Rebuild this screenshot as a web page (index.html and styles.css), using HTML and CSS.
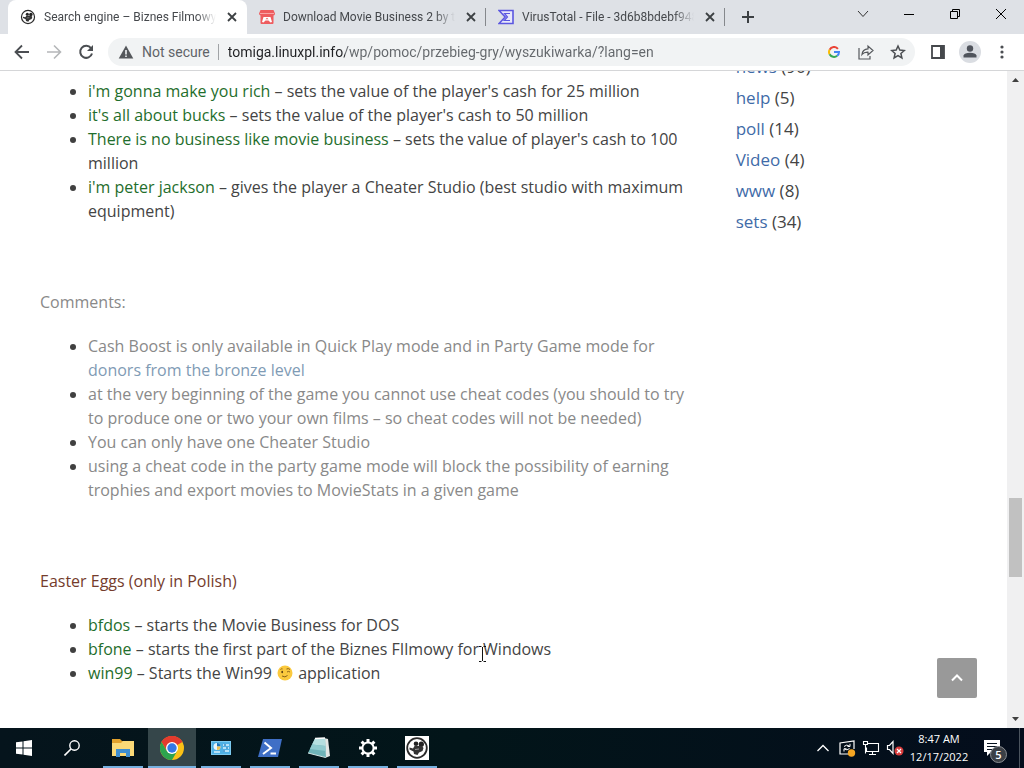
FILE: index.html
```html
<!DOCTYPE html>
<html lang="en">
<head>
<meta charset="utf-8">
<title>Search engine – Biznes Filmowy</title>
<link rel="stylesheet" href="styles.css">
</head>
<body>
<svg class="sprite" aria-hidden="true">
  <symbol id="x" viewBox="0 0 12 12"><path d="M2 2l8 8M10 2l-8 8" stroke="#3c4043" stroke-width="1.8" fill="none"/></symbol>
  <symbol id="mouse" viewBox="0 0 24 24"><circle cx="12" cy="12" r="9.800" fill="#fff" stroke="#2a2a2a" stroke-width="1.800"/><circle cx="11" cy="7.800" r="2.300" fill="#222"/><circle cx="16.300" cy="8.200" r="2.600" fill="#222"/><path d="M4.500 11.500l3.500 1 1.500-2.500h7.500l1.500 2-1 3-3.500 1.500-1.500 2.500-3.500-1-.5-2.500-4-2z" fill="#333"/><path d="M10 13.500l4-.5" stroke="#999" stroke-width="1"/></symbol>
</svg>
<div class="desktop">
  <header class="tabstrip">
    <div class="tabs" role="tablist">
      <div class="tab tab-active" role="tab" aria-selected="true">
        <svg class="i16"><use href="#mouse"/></svg>
        <span class="tab-title">Search engine – Biznes Filmowy</span>
        <button class="tab-close" aria-label="Close tab"><svg class="i12"><use href="#x"/></svg></button>
      </div>
      <div class="tab" role="tab">
        <svg class="i16" viewBox="0 0 16 16"><path d="M1.500 1h13l1.500 3.500q0 1.800-1.500 2V14q0 1-1 1h-11q-1 0-1-1V6.500Q0 6 0 4.500z" fill="#ee5c5f"/><path d="M1 4.500h14" stroke="#f9a5a6" stroke-width="1"/><path d="M4.500 8h7l1.500 5-1.500.5-2-2h-3l-2 2L3 13z" fill="#fff"/><path d="M8 8.800l1.500 1.500h-3z" fill="#ee5c5f"/></svg>
        <span class="tab-title">Download Movie Business 2 by tomiga</span>
        <button class="tab-close" aria-label="Close tab"><svg class="i12"><use href="#x"/></svg></button>
      </div>
      <div class="tab" role="tab">
        <svg class="i16" viewBox="0 0 16 16"><path d="M1 1.500h14v13H1L7.200 8z" fill="#e8e8fb" stroke="#5b57e0" stroke-width="1.600"/><path d="M12 4.500H6.500L9.500 8l-3.300 3.500H12" fill="none" stroke="#5b57e0" stroke-width="1.200"/></svg>
        <span class="tab-title">VirusTotal - File - 3d6b8bdebf948c2a</span>
        <button class="tab-close" aria-label="Close tab"><svg class="i12"><use href="#x"/></svg></button>
      </div>
      <button class="new-tab" aria-label="New tab"><svg class="i14" viewBox="0 0 14 14"><path d="M7 1v12M1 7h12" stroke="#3c4043" stroke-width="2"/></svg></button>
    </div>
    <div class="window-controls">
      <button aria-label="Search tabs"><svg class="i12" viewBox="0 0 12 12"><path d="M1 3l5 5.500L11 3" fill="none" stroke="#333"/></svg></button>
      <button aria-label="Minimize"><svg class="i12" viewBox="0 0 12 12"><path d="M1 6.500h10" stroke="#000"/></svg></button>
      <button aria-label="Restore"><svg class="i12" viewBox="0 0 12 12"><path d="M1.500 3.500h7v7h-7zM3.500 3.500v-2h7v7h-2" fill="none" stroke="#000"/></svg></button>
      <button aria-label="Close"><svg class="i12" viewBox="0 0 12 12"><path d="M1 1l10 10M11 1L1 11" stroke="#000"/></svg></button>
    </div>
  </header>

  <div class="toolbar">
    <button class="tool" aria-label="Back"><svg class="i16" viewBox="0 0 16 16"><path d="M15 8H2M8 1.500L1.500 8 8 14.500" fill="none" stroke="#4b4e52" stroke-width="1.800"/></svg></button>
    <button class="tool" aria-label="Forward"><svg class="i16" viewBox="0 0 16 16"><path d="M1 8h13M8 1.500L14.500 8 8 14.500" fill="none" stroke="#b5b7b9" stroke-width="1.600"/></svg></button>
    <button class="tool" aria-label="Reload"><svg class="i16" viewBox="0 0 16 16"><path d="M13 4.200A6 6 0 1 0 14 9.500" fill="none" stroke="#4b4e52" stroke-width="2"/><path d="M15 1v6H9z" fill="#4b4e52"/></svg></button>
    <div class="omnibox">
      <svg class="i16" viewBox="0 0 16 16"><path d="M8 1.500l7.300 13H.7z" fill="#54575b"/><path d="M8 6v4.500M8 11.500V13" stroke="#f1f3f4" stroke-width="1.600"/></svg>
      <span class="security">Not secure</span>
      <input class="address" type="text" aria-label="Address" value="tomiga.linuxpl.info/wp/pomoc/przebieg-gry/wyszukiwarka/?lang=en">
      <button class="tool" aria-label="Google"><svg class="i12" viewBox="0 0 12 12" fill="none" stroke-width="2"><path d="M9.900 2.800A5 5 0 0 0 1.600 3.700" stroke="#ea4335"/><path d="M1.600 3.700a5 5 0 0 0 0 4.600" stroke="#fbbc05"/><path d="M1.600 8.300a5 5 0 0 0 7.600 1.500" stroke="#34a853"/><path d="M9.200 9.800Q11 8.300 11 6H6" stroke="#4285f4"/></svg></button>
      <button class="tool" aria-label="Share"><svg class="i16" viewBox="0 0 16 16"><path d="M1 4v11h11v-3M4 10.500q.5-5.500 6-5.700V2l5 4.500-5 4.500V8.200Q6 8 4 10.500z" fill="none" stroke="#55585c" stroke-width="1.200"/></svg></button>
      <button class="tool" aria-label="Bookmark"><svg class="i16" viewBox="0 0 16 16"><path d="M8 2l1.800 4.100 4.500.4-3.400 3 1 4.400L8 11.600l-3.900 2.300 1-4.400-3.400-3 4.500-.4z" fill="none" stroke="#4b4e52" stroke-width="1.500"/></svg></button>
    </div>
    <button class="tool" aria-label="Side panel"><svg class="i14" viewBox="0 0 14 14"><path d="M1 1h12v12H1z" fill="none" stroke="#45484c" stroke-width="1.800"/><path d="M9 1h4v12H9z" fill="#45484c"/></svg></button>
    <button class="tool" aria-label="Profile"><svg class="i22" viewBox="0 0 22 22"><circle cx="11" cy="11" r="11" fill="#dadde2"/><circle cx="11" cy="7.500" r="3.200" fill="#50545c"/><path d="M4.500 16.500v-2q1-2.700 6.500-2.700t6.500 2.700v2z" fill="#50545c"/></svg></button>
    <button class="tool" aria-label="Menu"><svg class="i16" viewBox="0 0 16 16" fill="#4b4e52"><circle cx="8" cy="3" r="1.600"/><circle cx="8" cy="8" r="1.600"/><circle cx="8" cy="13" r="1.600"/></svg></button>
  </div>

  <div class="viewport">
    <div class="page">
      <main class="article">
        <ul class="list">
          <li><span class="code">i'm gonna make you rich</span> – sets the value of the player's cash for 25 million</li>
          <li><span class="code">it's all about bucks</span> – sets the value of the player's cash to 50 million</li>
          <li><span class="code">There is no business like movie business</span> – sets the value of player's cash to 100 million</li>
          <li><span class="code">i'm peter jackson</span> – gives the player a Cheater Studio (best studio with maximum equipment)</li>
        </ul>
        <section class="notes">
          <p>Comments:</p>
          <ul class="list">
            <li>Cash Boost is only available in Quick Play mode and in Party Game mode for <a href="#donors">donors from the bronze level</a></li>
            <li>at the very beginning of the game you cannot use cheat codes (you should to try to produce one or two your own films – so cheat codes will not be needed)</li>
            <li>You can only have one Cheater Studio</li>
            <li>using a cheat code in the party game mode will block the possibility of earning trophies and export movies to MovieStats in a given game</li>
          </ul>
        </section>
        <section class="eggs">
          <p>Easter Eggs (only in Polish)</p>
          <ul class="list">
            <li><span class="code">bfdos</span> – starts the Movie Business for DOS</li>
            <li><span class="code">bfone</span> – starts the first part of the Biznes FIlmowy for Windows</li>
            <li><span class="code">win99</span> – Starts the Win99 <svg class="wink" viewBox="0 0 16 16" role="img" aria-label="wink"><circle cx="8" cy="8" r="7.500" fill="#fbc93e"/><path d="M3.500 4.500q1-1 2-.6M9.500 4q2-1 3.500.5M10 7q1.500-1.200 3 0M5 11q3 2 5.500-.5" stroke="#8a6218" stroke-width="1" fill="none"/><ellipse cx="5.200" cy="7" rx=".9" ry="1.300" fill="#5f4313"/></svg> application</li>
          </ul>
        </section>
      </main>
      <aside>
        <ul class="tags">
          <li><a href="#news">news</a> (90)</li>
          <li><a href="#help">help</a> (5)</li>
          <li><a href="#poll">poll</a> (14)</li>
          <li><a href="#video">Video</a> (4)</li>
          <li><a href="#www">www</a> (8)</li>
          <li><a href="#sets">sets</a> (34)</li>
        </ul>
      </aside>
    </div>
    <div class="scrollbar" aria-hidden="true">
      <svg class="arrow" viewBox="0 0 17 17"><path d="M5 11h7L8.500 7z" fill="#404040"/></svg>
      <div class="track"><div class="thumb"></div></div>
      <svg class="arrow" viewBox="0 0 17 17"><path d="M5 6h7l-3.500 4z" fill="#404040"/></svg>
    </div>
    <button class="to-top" aria-label="Back to top"><svg class="i14" viewBox="0 0 14 14"><path d="M2 9.500L7 4.500l5 5" fill="none" stroke="#fff" stroke-width="2"/></svg></button>
    <svg class="cursor" viewBox="0 0 9 18" aria-hidden="true"><path d="M1 1.500h2.500M5.500 1.500H8M4.500 2v14M1 16.500h2.500M5.500 16.500H8" stroke="#111" fill="none"/></svg>
  </div>

  <footer class="taskbar">
    <button class="system" aria-label="Start"><svg class="i16" viewBox="0 0 16 16" fill="#fff"><path d="M0 2.300L6.500 1.400v6.100H0zM7.500 1.300L16 0v7.500H7.500zM0 8.500h6.500v6.100L0 13.700zM7.500 8.500H16V16l-8.500-1.300z"/></svg></button>
    <button class="system" aria-label="Search"><svg class="i16" viewBox="0 0 16 16"><circle cx="10.500" cy="5.500" r="4.700" fill="none" stroke="#fff" stroke-width="1.400"/><path d="M7 9L.5 15.500" stroke="#fff" stroke-width="1.600"/></svg></button>
    <div class="apps">
      <button class="app" aria-label="File Explorer"><svg class="i24" viewBox="0 0 24 24"><path d="M1 3h8l2 2h12v4H1z" fill="#e2a12c"/><path d="M1 7h9l2-2h11v15H1z" fill="#fbd977"/><path d="M5 13h14v8h-4v-4H9v4H5z" fill="#3f8ed0"/></svg></button>
      <button class="app app-current" aria-label="Chrome"><svg class="i24" viewBox="0 0 24 24"><circle cx="12" cy="12" r="12" fill="#fbc116"/><path d="M12 12L1.600 6A12 12 0 0 1 22.400 6z" fill="#e33b2e"/><path d="M12 6h10.400A12 12 0 0 0 1.600 6l5.200 9z" fill="#e33b2e"/><path d="M1.600 6A12 12 0 0 0 12 24l5.200-9-5.200 3-5.200-3z" fill="#2da44e"/><circle cx="12" cy="12" r="6" fill="#fff"/><circle cx="12" cy="12" r="4.700" fill="#3478e5"/></svg></button>
      <button class="app" aria-label="Control Panel"><svg class="i22" viewBox="0 0 22 22"><path d="M1 4h20v14H1z" fill="#7ccaf0"/><path d="M2 5h18v12H2z" fill="#4fb0e4"/><circle cx="7" cy="9.500" r="3.500" fill="#e9f6fd"/><path d="M7 9.500V6a3.500 3.500 0 0 1 3.500 3.500z" fill="#1b74b8"/><path d="M7 9.500h3.500A3.500 3.500 0 0 1 7 13z" fill="#efc252"/><path d="M13 8h6M13 11h6M13 14h6M4 15h6" stroke="#d9f1fd" stroke-width="1.300"/><path d="M15 7v2M17 10v2M14 13v2" stroke="#1b74b8" stroke-width="1.200"/></svg></button>
      <button class="app" aria-label="PowerShell"><svg class="i24" viewBox="0 0 24 24"><path d="M5 3h19l-4 18H0z" fill="#3f6fc6"/><path d="M6.500 6.500l6.500 5.500-8 6M12.500 17.500H18" fill="none" stroke="#fff" stroke-width="2"/></svg></button>
      <button class="app" aria-label="Notepad"><svg class="i24" viewBox="0 0 24 24"><path d="M17 2l4 1 2 17-5 2z" fill="#e3e6e4"/><path d="M8 2.500l10-.5 1 19.500L1 17z" fill="#6fb3b8"/><path d="M8 2.500l10-.5.400 8L5 8.500z" fill="#b5dfe0"/><path d="M5 8.500l13.400 1.500.300 5L3 13z" fill="#8fcace"/><path d="M8 2.500L18 2" stroke="#fff" stroke-width="1.500"/><path d="M1 17l17.500 4.500" stroke="#d5e6e6"/></svg></button>
      <button class="app" aria-label="Settings"><svg class="i20" viewBox="0 0 20 20"><circle cx="10" cy="10" r="5.600" fill="none" stroke="#fff" stroke-width="2"/><g stroke="#fff" stroke-width="3"><path d="M10 1v3M10 16v3M1 10h3M16 10h3M3.600 3.600l2.200 2.200M14.200 14.200l2.200 2.200M3.600 16.400l2.200-2.200M14.200 5.800l2.200-2.200"/></g></svg></button>
      <button class="app" aria-label="Biznes Filmowy"><svg class="i24 plate"><use href="#mouse"/></svg></button>
    </div>
    <div class="tray">
      <button class="tray-item" aria-label="Show hidden icons"><svg class="i14" viewBox="0 0 14 14"><path d="M1.500 10L7 4.500l5.500 5.500" fill="none" stroke="#fff" stroke-width="1.300"/></svg></button>
      <button class="tray-item" aria-label="Update"><svg class="i18" viewBox="0 0 18 18"><path d="M11 15H2V4l14-2v8" fill="none" stroke="#fff" stroke-width="1.200"/><path d="M6 7.500q2.500-2.500 5.500-.5M12 4.800v2.700H9.500M11.500 9.500q-2.500 2.500-5 .5M6 12.500V9.800h2.500" fill="none" stroke="#fff"/><circle cx="13.500" cy="14" r="3.700" fill="#f5a623"/></svg></button>
      <button class="tray-item" aria-label="Network"><svg class="i18" viewBox="0 0 18 18"><path d="M6 4.500h10.500v8H4.500v-4M10.500 12.500v3M7 15.500h7M1.500 2.500h4v3h-4zM3.500 5.500v9" fill="none" stroke="#fff" stroke-width="1.100"/></svg></button>
      <button class="tray-item" aria-label="Muted"><svg class="i18" viewBox="0 0 18 18"><path d="M1.500 6.500h2l3.500-4v12l-3.500-4h-2z" fill="none" stroke="#fff" stroke-width="1.200"/><circle cx="13" cy="12" r="4.500" fill="#d83b3b"/><path d="M11 10l4 4M15 10l-4 4" stroke="#fff" stroke-width="1.200"/></svg></button>
      <div class="clock"><time>8:47 AM</time><time>12/17/2022</time></div>
      <button class="notify" aria-label="Notifications"><svg class="i18" viewBox="0 0 18 18"><path d="M1 1h16v12H8l-4 4v-4H1z" fill="#fff"/><path d="M4 4.500h10M4 7.500h10M4 10.500h6" stroke="#07121f" stroke-width="1.200"/></svg><span class="count">5</span></button>
      <div class="peek"></div>
    </div>
  </footer>
</div>
</body>
</html>
```

FILE: styles.css
```css
* { box-sizing: border-box; }
body { margin: 0; font-family: "Open Sans", "Noto Sans", sans-serif; color: #444; background: #fff; }
button { border: 0; padding: 0; background: none; font: inherit; color: inherit; display: flex; align-items: center; justify-content: center; flex: none; }
svg { display: block; flex: none; }
ul { margin: 0; padding: 0; }
p { margin: 0; }
a { text-decoration: none; }
.sprite { position: absolute; width: 0; height: 0; }
.i12 { width: 12px; height: 12px; }
.i14 { width: 14px; height: 14px; }
.i16 { width: 16px; height: 16px; }
.i18 { width: 18px; height: 18px; }
.i20 { width: 20px; height: 20px; }
.i22 { width: 22px; height: 22px; }
.i24 { width: 24px; height: 24px; }
.desktop { display: flex; flex-direction: column; height: 100vh; overflow: hidden; }

.tabstrip { display: flex; flex: none; height: 34px; background: #dee1e6; font-family: Roboto, "Open Sans", sans-serif; }
.tabs { display: flex; flex: 1; min-width: 0; padding-left: 8px; }
.tab { display: flex; align-items: center; gap: 8px; flex: 0 1 239px; min-width: 0; padding: 0 7px 0 12px; font-size: 12px; line-height: 18px; color: #45484c; background: linear-gradient(#85888c, #85888c) right center / 1px 18px no-repeat; }
.tab-active { background: #fff; border-radius: 8px 8px 0 0; }
.tab-title { flex: 1; min-width: 0; overflow: hidden; white-space: nowrap; -webkit-mask-image: linear-gradient(to left, transparent, #000 20px); mask-image: linear-gradient(to left, transparent, #000 20px); }
.tab-close { width: 16px; height: 16px; }
.new-tab { width: 46px; }
.window-controls { display: flex; flex: none; padding-bottom: 6px; }
.window-controls button { width: 46px; }

.toolbar { display: flex; align-items: center; flex: none; height: 37px; padding: 0 6px; border-bottom: 1px solid #d5d6d8; background: #fff; font-family: Roboto, "Open Sans", sans-serif; }
.tool { width: 32px; height: 28px; }
.omnibox { display: flex; align-items: center; flex: 1; min-width: 0; height: 28px; margin: 0 7px 0 6px; padding: 0 1px 0 10px; border-radius: 14px; background: #f1f3f4; font-size: 14px; line-height: 20px; }
.security { margin: 0 9px 0 8px; padding-right: 8px; border-right: 1px solid #a0a3a6; color: #5f6368; line-height: 16px; }
.address { flex: 1; min-width: 0; border: 0; outline: 0; padding: 0; font: inherit; color: #5f6368; background: linear-gradient(90deg, #202124 0 117px, #63676b 117px); -webkit-background-clip: text; background-clip: text; -webkit-text-fill-color: transparent; }

.viewport { position: relative; display: flex; flex: 1; min-height: 0; overflow: hidden; }
.page { display: grid; flex: 1; grid-template-columns: 14fr 5fr; column-gap: 48px; min-width: 0; padding: 8px 40px 0; font-size: 16px; line-height: 24px; }
.article { display: flex; flex-direction: column; gap: 67px; min-width: 0; }
.list { padding-left: 48px; }
.list li::marker { color: #404040; }
.article section { display: flex; flex-direction: column; gap: 20px; }
.code { color: #1f6e2c; }
.notes { color: #898989; }
.notes a { color: #7f9bb5; }
.eggs p { color: #753c2c; }
.wink { display: inline-block; width: 16px; height: 16px; vertical-align: -2px; margin: 0 1px; }
.tags { list-style: none; margin-top: -28px; font-size: 17px; line-height: 31px; }
.tags a { color: #3f6ba8; }

.scrollbar { display: flex; flex-direction: column; width: 17px; background: #f0f0f1; }
.arrow { width: 17px; height: 17px; }
.track { display: flex; flex-direction: column; flex: 1; padding: 0 2px; }
.track::before { content: ""; flex: 410; }
.track::after { content: ""; flex: 134; }
.thumb { height: 79px; background: #c1c1c1; }
.to-top { position: absolute; right: 47px; bottom: 30px; width: 40px; height: 40px; border-radius: 2px; background: #999; }
.cursor { position: absolute; left: 478px; top: 574px; width: 9px; height: 18px; }

.taskbar { display: flex; flex: none; height: 40px; background: linear-gradient(90deg, #05141c, #021519 45%, #040d1c); color: #fff; }
.system { width: 48px; }
.apps { display: flex; gap: 1px; flex: 1; margin-left: 3px; }
.app { width: 48px; background: linear-gradient(#76b0e0, #76b0e0) center bottom / 40px 2px no-repeat; }
.app-current { background: linear-gradient(#76b0e0, #76b0e0) center bottom / 48px 2px no-repeat #35464a; }
.plate { background: #fff; }
.tray { display: flex; flex: none; }
.tray-item { width: 24px; }
.clock { display: flex; flex-direction: column; justify-content: center; align-items: center; width: 64px; font-size: 11px; line-height: 18px; }
.notify { position: relative; width: 42px; margin-right: 6px; }
.count { position: absolute; left: 19px; top: 18px; width: 17px; height: 17px; border: 1px solid #8b8f94; border-radius: 50%; background: #3b4046; font-size: 11px; line-height: 15px; font-weight: 600; }
.peek { width: 5px; border-left: 1px solid #4b545e; }
```
